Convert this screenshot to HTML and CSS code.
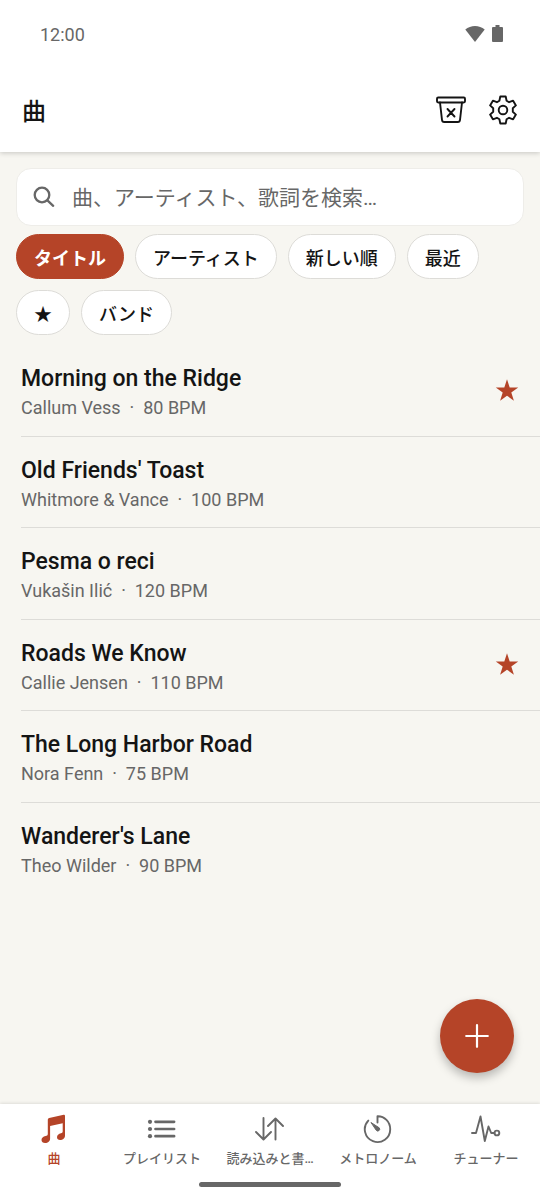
FILE: index.html
```html
<!DOCTYPE html>
<html lang="ja">
<head>
<meta charset="utf-8">
<meta name="viewport" content="width=device-width, initial-scale=1">
<title>曲</title>
<link rel="stylesheet" href="styles.css">
</head>
<body>
<div class="app">
  <header class="top">
    <div class="status">
      <span>12:00</span>
      <span class="status-icons">
        <svg width="20" height="18" viewBox="0 0 20 18" fill="currentColor" aria-hidden="true"><path d="M.3 4.600C5.500-.2 14.500-.2 19.700 4.600L10 17z"/></svg>
        <svg width="11" height="18" viewBox="0 0 11 18" fill="currentColor" aria-hidden="true"><path d="M3.500 0h4v2H10q1 0 1 1v13q0 1-1 1H1q-1 0-1-1V3q0-1 1-1h2.500z"/></svg>
      </span>
    </div>
    <div class="bar">
      <h1 class="bar-title">曲</h1>
      <div class="bar-actions">
        <button class="icon-btn" type="button" aria-label="ゴミ箱">
          <svg width="30" height="30" viewBox="0 0 30 30" fill="none" stroke="currentColor" stroke-width="1.900" stroke-linecap="round" stroke-linejoin="round"><rect x="1" y="2.500" width="28" height="5" rx="1.200"/><path d="M4 7.500l2 17.500q.2 2 2.200 2h13.600q2 0 2.200-2L26 7.500M11.500 14l7 7.500M18.500 14l-7 7.500"/></svg>
        </button>
        <button class="icon-btn" type="button" aria-label="設定">
          <svg width="30" height="30" viewBox="0 0 30 30" fill="none" stroke="currentColor" stroke-width="1.900" stroke-linejoin="round"><circle cx="15" cy="15" r="4.300"/><path d="M12.300 1.500h5.400l.9 4.200 2.500 1.500 4-1.500 2.800 4.700-3.100 2.800v3.600l3.100 2.800-2.800 4.700-4-1.500-2.500 1.500-.9 4.200h-5.400l-.9-4.200-2.500-1.500-4 1.500-2.800-4.700 3.100-2.800v-3.600l-3.100-2.800 2.800-4.700 4 1.500 2.500-1.500z"/></svg>
        </button>
      </div>
    </div>
  </header>

  <main class="content">
    <label class="search">
      <svg width="22" height="22" viewBox="0 0 22 22" fill="none" stroke="currentColor" stroke-width="2.300" stroke-linecap="round" aria-hidden="true"><circle cx="9" cy="9" r="7.300"/><path d="M14.400 14.400l5.800 5.400"/></svg>
      <input class="search-input" type="text" placeholder="曲、アーティスト、歌詞を検索…" aria-label="検索">
    </label>
    <div class="chips">
      <button class="chip chip-active" type="button">タイトル</button>
      <button class="chip" type="button">アーティスト</button>
      <button class="chip" type="button">新しい順</button>
      <button class="chip" type="button">最近</button>
      <button class="chip" type="button" aria-label="お気に入り">★</button>
      <button class="chip" type="button">バンド</button>
    </div>
    <ul class="songs">
      <li class="song"><div><h2 class="song-title">Morning on the Ridge</h2><p class="song-meta">Callum Vess&nbsp; ·&nbsp; 80 BPM</p></div>
        <svg class="star" width="24" height="24" viewBox="0 0 24 24" fill="currentColor" aria-hidden="true"><path d="M12 .2l2.700 8.200 8.500.1-6.900 5 2.600 8.200-6.900-5-6.900 5 2.600-8.200-6.900-5 8.500-.1z"/></svg></li>
      <li class="song"><div><h2 class="song-title">Old Friends' Toast</h2><p class="song-meta">Whitmore &amp; Vance&nbsp; ·&nbsp; 100 BPM</p></div></li>
      <li class="song"><div><h2 class="song-title">Pesma o reci</h2><p class="song-meta">Vukašin Ilić&nbsp; ·&nbsp; 120 BPM</p></div></li>
      <li class="song"><div><h2 class="song-title">Roads We Know</h2><p class="song-meta">Callie Jensen&nbsp; ·&nbsp; 110 BPM</p></div>
        <svg class="star" width="24" height="24" viewBox="0 0 24 24" fill="currentColor" aria-hidden="true"><path d="M12 .2l2.700 8.200 8.500.1-6.900 5 2.600 8.200-6.900-5-6.900 5 2.600-8.200-6.900-5 8.500-.1z"/></svg></li>
      <li class="song"><div><h2 class="song-title">The Long Harbor Road</h2><p class="song-meta">Nora Fenn&nbsp; ·&nbsp; 75 BPM</p></div></li>
      <li class="song"><div><h2 class="song-title">Wanderer's Lane</h2><p class="song-meta">Theo Wilder&nbsp; ·&nbsp; 90 BPM</p></div></li>
    </ul>
    <button class="fab" type="button" aria-label="追加">
      <svg width="24" height="24" viewBox="0 0 24 24" fill="none" stroke="currentColor" stroke-width="2.200" stroke-linecap="round"><path d="M12 1.200v21.600M1.200 12h21.600"/></svg>
    </button>
  </main>

  <footer class="bottom">
    <nav class="tabs">
      <a class="tab tab-active" href="#songs" aria-current="page">
        <svg width="30" height="30" viewBox="0 0 30 30" fill="currentColor" aria-hidden="true"><path d="M8.800 5.600Q9 4.300 10.200 3.900L24.700.8Q26 .6 26 1.900V21.500q0 3-3 4.200c-2.600 1-5 0-5-2.400 0-2.300 1.600-3.300 4-4q1.700-.4 1.700-1.800V9.200l-12.600 2.700V24.500q0 3-3 4.200c-2.700 1-5.600 0-5.600-2.600 0-2.300 1.600-3.300 4.100-4q2.200-.4 2.200-1.800z"/></svg>
        <span class="tab-label">曲</span></a>
      <a class="tab" href="#playlists">
        <svg width="30" height="30" viewBox="0 0 30 30" fill="none" stroke="currentColor" stroke-width="2.700" stroke-linecap="round" aria-hidden="true"><path d="M8.500 7.800h18.600M8.500 15h18.600M8.500 22.200h18.600"/><g fill="currentColor" stroke="none"><circle cx="3" cy="7.800" r="2.100"/><circle cx="3" cy="15" r="2.100"/><circle cx="3" cy="22.200" r="2.100"/></g></svg>
        <span class="tab-label">プレイリスト</span></a>
      <a class="tab" href="#import" aria-label="読み込みと書き出し">
        <svg width="30" height="30" viewBox="0 0 30 30" fill="none" stroke="currentColor" stroke-width="1.900" stroke-linecap="round" stroke-linejoin="round" aria-hidden="true"><path d="M8.500 4v21M1 18l7.500 7.500 7.500-7.500M20.500 25.500V4.500M13 12l7.500-7.500 7.500 7.500"/></svg>
        <span class="tab-label">読み込みと書…</span></a>
      <a class="tab" href="#metronome">
        <svg width="30" height="30" viewBox="0 0 30 30" fill="none" stroke="currentColor" stroke-width="1.900" stroke-linecap="round" stroke-linejoin="round" aria-hidden="true"><path d="M14.500 8.500V2.200C21.500 2 27.200 7.800 27.200 15A12.700 12.700 0 1 1 5.300 6.600"/><path d="M8.300 8.700l7.900 5.100a1.900 1.900 0 0 1-2.800 2.600z" fill="currentColor" stroke-width="1"/></svg>
        <span class="tab-label">メトロノーム</span></a>
      <a class="tab" href="#tuner">
        <svg width="30" height="30" viewBox="0 0 30 30" fill="none" stroke="currentColor" stroke-width="1.900" stroke-linecap="round" stroke-linejoin="round" aria-hidden="true"><path d="M1 19h4L9.500 2.500 13.800 27 17.500 12.500l2.700 6.500h3.300"/><circle cx="25.900" cy="19" r="2.400"/></svg>
        <span class="tab-label">チューナー</span></a>
    </nav>
    <div class="home-indicator"></div>
  </footer>
</div>
</body>
</html>
```
FILE: styles.css
```css
:root {
  --accent: #b54428;
  --ink: #141414;
  --muted: #676767;
  --paper: #f7f6f1;
  --line: #dddcd8;
}

* {
  box-sizing: border-box;
}

body {
  margin: 0;
  background: var(--paper);
  color: var(--ink);
  font-family: Roboto, "Noto Sans CJK JP", sans-serif;
}

button {
  padding: 0;
  border: 0;
  background: none;
  color: inherit;
  font: inherit;
}

h1,
h2,
p,
ul {
  margin: 0;
  padding: 0;
}

svg {
  display: block;
  flex: none;
}

.app {
  display: flex;
  flex-direction: column;
  min-height: 100vh;
}

.top {
  position: relative;
  background: #fff;
  box-shadow: 0 1px 5px rgba(0, 0, 0, 0.2);
}

.status {
  display: flex;
  align-items: center;
  justify-content: space-between;
  height: 68px;
  padding: 0 37px 0 40px;
  color: var(--muted);
  font-size: 18px;
}

.status-icons {
  display: flex;
  align-items: center;
  gap: 7px;
}

.bar {
  display: flex;
  align-items: center;
  justify-content: space-between;
  height: 84px;
  padding: 0 22px;
}

.bar-title {
  padding-top: 3px;
  font-size: 24px;
  font-weight: 500;
  line-height: 32px;
}

.bar-actions {
  display: flex;
  gap: 22px;
}

.content {
  position: relative;
  display: flex;
  flex: 1;
  flex-direction: column;
  padding-top: 16px;
}

.search {
  display: flex;
  align-items: center;
  gap: 17px;
  height: 58px;
  margin: 0 16px;
  padding: 0 16px;
  border: 1px solid #eeede9;
  border-radius: 15px;
  background: #fff;
  color: var(--muted);
}

.search-input {
  flex: 1;
  min-width: 0;
  padding: 2px 0 0;
  border: 0;
  outline: 0;
  background: none;
  color: var(--ink);
  font: inherit;
  font-size: 21px;
}

.search-input::placeholder {
  color: var(--muted);
  opacity: 1;
}

.chips {
  display: flex;
  flex-wrap: wrap;
  gap: 11px;
  padding: 8px 16px 10px;
}

.chip {
  height: 45px;
  padding: 0 17px;
  border: 1px solid var(--line);
  border-radius: 23px;
  background: #fff;
  font-size: 18px;
  font-weight: 500;
}

.chip-active {
  border-color: var(--accent);
  background: var(--accent);
  color: #fff;
  font-weight: 700;
}

.songs {
  list-style: none;
}

.song {
  display: flex;
  align-items: center;
  justify-content: space-between;
  margin-left: 21px;
  padding: 17px 21px 16px 0;
  border-bottom: 1px solid var(--line);
}

.song:last-child {
  border-bottom: 0;
}

.song-title {
  font-size: 23px;
  font-weight: 500;
  line-height: 34px;
}

.song-meta {
  margin-top: 1px;
  color: var(--muted);
  font-size: 18px;
  line-height: 1.25;
}

.star {
  color: var(--accent);
}

.fab {
  position: absolute;
  right: 26px;
  bottom: 31px;
  display: grid;
  place-items: center;
  width: 74px;
  height: 74px;
  border-radius: 50%;
  background: var(--accent);
  box-shadow: 0 5px 10px rgba(0, 0, 0, 0.25);
  color: #fff;
}

.bottom {
  background: #fff;
  box-shadow: 0 -1px 3px rgba(0, 0, 0, 0.1);
}

.tabs {
  display: grid;
  grid-template-columns: repeat(5, minmax(0, 1fr));
  padding-top: 10px;
}

.tab {
  display: flex;
  flex-direction: column;
  align-items: center;
  gap: 5px;
  color: var(--muted);
  text-decoration: none;
}

.tab-active {
  color: var(--accent);
}

.tab-label {
  font-size: 13px;
  font-weight: 500;
  line-height: 20px;
  white-space: nowrap;
}

.home-indicator {
  width: 142px;
  height: 5px;
  margin: 13px auto;
  border-radius: 3px;
  background: var(--muted);
}
```
